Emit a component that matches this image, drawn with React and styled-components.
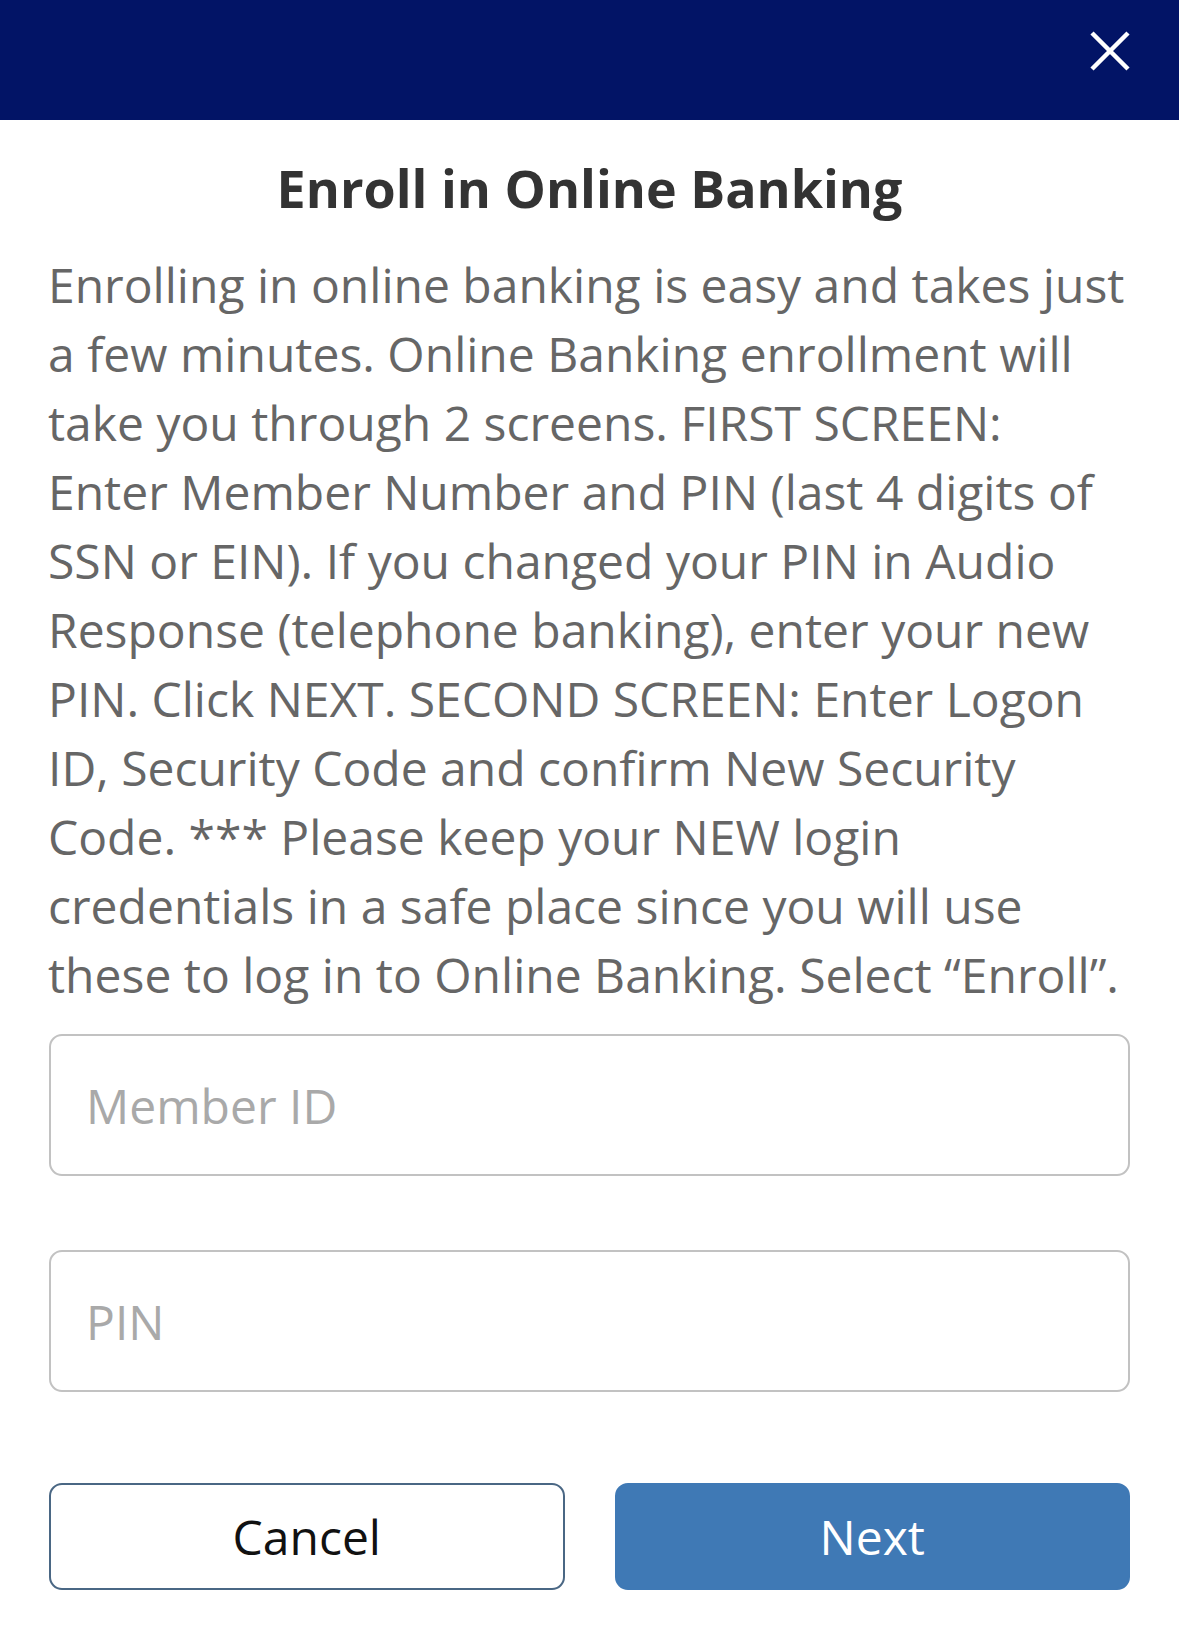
import React from "react";
import styled, { createGlobalStyle } from "styled-components";

const GlobalStyle = createGlobalStyle`
  html, body { margin: 0; padding: 0; background: #ffffff; }
  body { font-family: "Open Sans", "Noto Sans", sans-serif; }
  * { box-sizing: border-box; }
`;

const Page = styled.div`
  width: 1179px;
  min-height: 1640px;
  background: #ffffff;
  display: flex;
  flex-direction: column;
`;

const Header = styled.header`
  height: 120px;
  background: #021466;
  display: flex;
  align-items: flex-start;
  justify-content: flex-end;
  padding: 31px 49px 0 0;
`;

const CloseButton = styled.button`
  width: 40px;
  height: 40px;
  padding: 0;
  border: none;
  background: transparent;
  cursor: pointer;
  display: flex;
  svg { display: block; }
`;

const Body = styled.main`
  padding: 37px 49px 0;
  display: flex;
  flex-direction: column;
`;

const Title = styled.h1`
  margin: 0;
  font-family: "Open Sans", sans-serif;
  font-weight: 700;
  font-size: 52px;
  line-height: 62px;
  color: #333333;
  text-align: center;
`;

const Intro = styled.p`
  margin: 31px 0 0 -1px;
  font-family: "Open Sans", sans-serif;
  font-weight: 400;
  font-size: 48px;
  line-height: 69px;
  color: #666666;
`;

const Form = styled.form`
  margin-top: 25px;
  display: flex;
  flex-direction: column;
  gap: 74px;
`;

const Field = styled.input`
  width: 100%;
  height: 142px;
  border: 2.5px solid #c2c2c2;
  border-radius: 13px;
  padding: 0 35px;
  font-family: "Open Sans", sans-serif;
  font-size: 48px;
  color: #333333;
  background: #ffffff;
  outline: none;
  &::placeholder { color: #a9a9a9; }
`;

const Actions = styled.div`
  margin-top: 91px;
  display: grid;
  grid-template-columns: 1fr 1fr;
  gap: 50px;
`;

const Button = styled.button`
  height: 107px;
  border-radius: 13px;
  font-family: "Open Sans", sans-serif;
  font-size: 48px;
  font-weight: 400;
  cursor: pointer;
  border: 2.5px solid ${(p) => (p.$primary ? "#3f79b5" : "#4a6784")};
  background: ${(p) => (p.$primary ? "#3f79b5" : "#ffffff")};
  color: ${(p) => (p.$primary ? "#ffffff" : "#111111")};
`;

export default function App() {
  return (
    <>
      <GlobalStyle />
      <Page>
        <Header>
          <CloseButton aria-label="Close">
            <svg width="40" height="40" viewBox="0 0 40 40">
              <path d="M2 2 L38 38 M38 2 L2 38" stroke="#ffffff" strokeWidth="4.5" strokeLinecap="butt" />
            </svg>
          </CloseButton>
        </Header>
        <Body>
          <Title>Enroll in Online Banking</Title>
          <Intro>
            Enrolling in online banking is easy and takes just a few minutes. Online Banking enrollment will
            take you through 2 screens. FIRST SCREEN: Enter Member Number and PIN (last 4 digits of SSN or
            EIN). If you changed your PIN in Audio Response (telephone banking), enter your new PIN. Click
            NEXT. SECOND SCREEN: Enter Logon ID, Security Code and confirm New Security Code. *** Please keep
            your NEW login credentials in a safe place since you will use these to log in to Online Banking.
            Select “Enroll”.
          </Intro>
          <Form onSubmit={(e) => e.preventDefault()}>
            <Field type="text" placeholder="Member ID" />
            <Field type="password" placeholder="PIN" />
          </Form>
          <Actions>
            <Button type="button">Cancel</Button>
            <Button type="button" $primary>Next</Button>
          </Actions>
        </Body>
      </Page>
    </>
  );
}
